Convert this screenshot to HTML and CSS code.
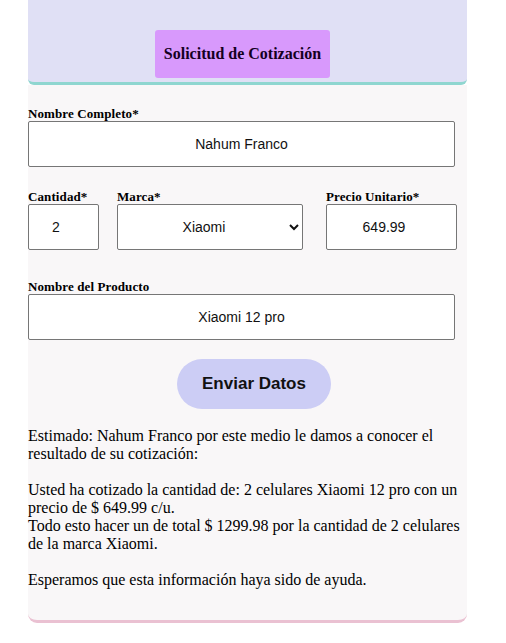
FILE: index.html
```html
<!DOCTYPE html>
<html lang="es">
<head>
<meta charset="utf-8">
<title>Solicitud de Cotización</title>
<link rel="stylesheet" href="styles.css">
</head>
<body>
<div class="container">
  <header class="header">
    <h1 class="title">Solicitud de Cotización</h1>
  </header>
  <section class="form-section">
    <div class="field">
      <label class="label">Nombre Completo*</label>
      <input class="input full" type="text" value="Nahum Franco">
    </div>
    <div class="row">
      <div class="field col-qty">
        <label class="label">Cantidad*</label>
        <input class="input" type="number" value="2">
      </div>
      <div class="field col-brand">
        <label class="label">Marca*</label>
        <select class="input select">
          <option>Xiaomi</option>
        </select>
      </div>
      <div class="field col-price">
        <label class="label">Precio Unitario*</label>
        <input class="input" type="number" value="649.99">
      </div>
    </div>
    <div class="field product">
      <label class="label">Nombre del Producto</label>
      <input class="input full" type="text" value="Xiaomi 12 pro">
    </div>
    <button class="btn" type="button">Enviar Datos</button>
    <div class="result">
      <p>Estimado: Nahum Franco por este medio le damos a conocer el resultado de su cotización:</p>
      <p>Usted ha cotizado la cantidad de: 2 celulares Xiaomi 12 pro con un precio de $ 649.99 c/u.<br>Todo esto hacer un de total $ 1299.98 por la cantidad de 2 celulares de la marca Xiaomi.</p>
      <p>Esperamos que esta información haya sido de ayuda.</p>
    </div>
  </section>
</div>
</body>
</html>
```
FILE: styles.css
```css
html, body {
  margin: 0;
  padding: 0;
  background: #ffffff;
}
body {
  font-family: "Liberation Serif", "Times New Roman", serif;
  color: #000;
}
.container {
  width: 439px;
  margin-left: 28px;
}
.header {
  background: #e0e0f5;
  border-bottom: 3px solid #8fd6d0;
  border-radius: 0 0 6px 6px;
  padding-left: 127px;
  padding-top: 30px;
  box-sizing: border-box;
  height: 85px;
}
.title {
  margin: 0;
  width: 175px;
  height: 48px;
  background: #d899fc;
  border-radius: 3px;
  font-size: 16px;
  font-weight: bold;
  display: flex;
  align-items: center;
  justify-content: center;
  color: #14001e;
}
.form-section {
  background: #f9f7f8;
  border-bottom: 3px solid #eac1d2;
  border-radius: 0 0 9px 9px;
  padding-top: 21px;
  padding-bottom: 31px;
}
.field {
  display: flex;
  flex-direction: column;
}
.label {
  font-size: 13px;
  font-weight: bold;
  line-height: 15px;
  letter-spacing: 0.1px;
}
.input {
  box-sizing: border-box;
  height: 46px;
  border: 1px solid #767676;
  border-radius: 2px;
  background: #fff;
  font-family: "Liberation Sans", Arial, sans-serif;
  font-size: 14px;
  color: #111;
  text-align: center;
  padding: 0 4px;
}
.full {
  width: 427px;
}
.row {
  display: flex;
  margin-top: 22px;
}
.col-qty .input { width: 71px; }
.col-brand { margin-left: 18px; }
.col-brand .input { width: 186px; }
.col-price { margin-left: 23px; }
.col-price .input { width: 131px; }
.select {
  text-align-last: center;
  padding: 0 2px;
}
.product {
  margin-top: 29px;
}
.btn {
  display: block;
  margin: 19px 0 0 149px;
  width: 154px;
  height: 50px;
  border: none;
  border-radius: 25px;
  background: #cccdf5;
  font-family: "Liberation Sans", Arial, sans-serif;
  font-size: 17px;
  font-weight: bold;
  color: #111;
}
.result {
  margin-top: 18px;
  font-size: 16px;
  line-height: 18px;
}
.result p {
  margin: 0 0 18px 0;
}
.result p:last-child {
  margin-bottom: 0;
}
```
